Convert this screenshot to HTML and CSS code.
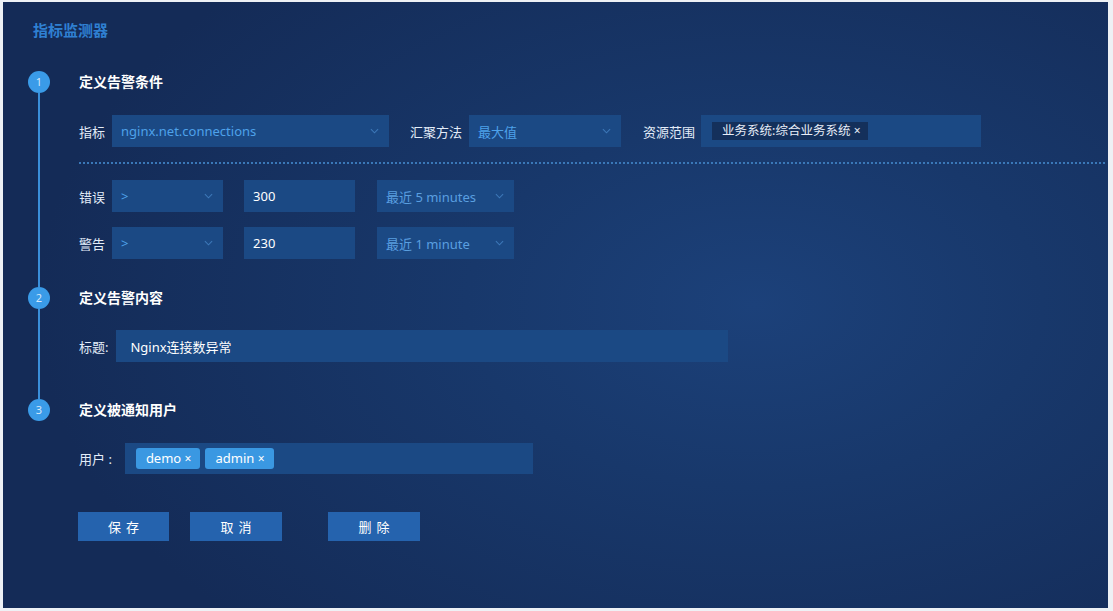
FILE: index.html
```html
<!DOCTYPE html>
<html lang="zh-CN">
<head>
<meta charset="utf-8">
<title>指标监测器</title>
<link rel="stylesheet" href="styles.css">
</head>
<body>
<div class="panel">
  <h1 class="page-title">指标监测器</h1>

  <section class="step">
    <div class="rail"><span class="dot">1</span><span class="line"></span></div>
    <div class="step-body step-body-1">
      <h2 class="step-title">定义告警条件</h2>
      <div class="row row-first">
        <span class="label">指标</span>
        <div class="field select w-metric"><span class="val">nginx.net.connections</span><svg class="chev" viewBox="0 0 10 6"><polyline points="1,1 5,5 9,1"/></svg></div>
        <span class="label label-gap">汇聚方法</span>
        <div class="field select w-agg"><span class="val">最大值</span><svg class="chev" viewBox="0 0 10 6"><polyline points="1,1 5,5 9,1"/></svg></div>
        <span class="label label-gap2">资源范围</span>
        <div class="field w-scope"><span class="scope-tag">业务系统:综合业务系统 <span class="x">×</span></span></div>
      </div>
      <div class="divider"></div>
      <div class="row row-cond">
        <span class="label">错误</span>
        <div class="field select w-op"><span class="val">&gt;</span><svg class="chev" viewBox="0 0 10 6"><polyline points="1,1 5,5 9,1"/></svg></div>
        <div class="field w-num"><span class="num">300</span></div>
        <div class="field select w-time"><span class="val val-light">最近 5 minutes</span><svg class="chev" viewBox="0 0 10 6"><polyline points="1,1 5,5 9,1"/></svg></div>
      </div>
      <div class="row row-cond2">
        <span class="label">警告</span>
        <div class="field select w-op"><span class="val">&gt;</span><svg class="chev" viewBox="0 0 10 6"><polyline points="1,1 5,5 9,1"/></svg></div>
        <div class="field w-num"><span class="num">230</span></div>
        <div class="field select w-time"><span class="val val-light">最近 1 minute</span><svg class="chev" viewBox="0 0 10 6"><polyline points="1,1 5,5 9,1"/></svg></div>
      </div>
    </div>
  </section>

  <section class="step">
    <div class="rail"><span class="dot">2</span><span class="line"></span></div>
    <div class="step-body step-body-2">
      <h2 class="step-title">定义告警内容</h2>
      <div class="row row-title">
        <span class="label label-colon">标题:</span>
        <div class="field w-titlebox"><span class="num">Nginx连接数异常</span></div>
      </div>
    </div>
  </section>

  <section class="step">
    <div class="rail"><span class="dot">3</span></div>
    <div class="step-body">
      <h2 class="step-title">定义被通知用户</h2>
      <div class="row row-users">
        <span class="label label-colon2">用户 :</span>
        <div class="field w-users">
          <span class="user-tag">demo <span class="x">×</span></span>
          <span class="user-tag">admin <span class="x">×</span></span>
        </div>
      </div>
      <div class="actions">
        <button class="btn btn-save">保存</button>
        <button class="btn btn-cancel">取消</button>
        <button class="btn btn-delete">删除</button>
      </div>
    </div>
  </section>
</div>
</body>
</html>
```
FILE: styles.css
```css
html, body {
  margin: 0;
  padding: 0;
  background: #eef1f5;
  width: 1113px;
  height: 611px;
  overflow: hidden;
}
body {
  font-family: "Noto Sans", "Noto Sans CJK SC", sans-serif;
  color: #ffffff;
}
.panel {
  box-sizing: border-box;
  margin: 2px 5px 3px 3px;
  height: 606px;
  padding: 18px 3px 0 25px;
  background-color: #142b57;
  background-image: radial-gradient(ellipse 65% 75% at 68% 50%, #1c417a 0%, #18386b 40%, #142b57 100%);
}
.page-title {
  margin: 0 0 31px 5px;
  font-size: 15px;
  line-height: 20px;
  font-weight: 700;
  color: #2f80d2;
}
.step {
  display: flex;
}
.rail {
  width: 22px;
  display: flex;
  flex-direction: column;
  align-items: center;
  margin-right: 29px;
}
.dot {
  width: 22px;
  height: 22px;
  border-radius: 50%;
  background: #3a9be8;
  color: #d5e8fb;
  font-size: 11px;
  line-height: 22px;
  text-align: center;
  flex: none;
}
.line {
  flex: 1;
  width: 2px;
  background: #3a8fda;
}
.step-body {
  flex: 1;
}
.step-body-1 { padding-bottom: 28px; }
.step-body-2 { padding-bottom: 37px; }
.step-title {
  margin: 0;
  font-size: 14px;
  line-height: 22px;
  font-weight: 700;
  color: #ffffff;
}
.row {
  display: flex;
  align-items: center;
}
.row-first { margin-top: 22px; }
.row-cond { margin-top: 16px; }
.row-cond2 { margin-top: 15px; }
.row-title { margin-top: 21px; }
.row-users { margin-top: 22px; }
.label {
  font-size: 13px;
  color: #e3ecf8;
  white-space: nowrap;
  margin-right: 7px;
}
.label-gap { margin-left: 21px; }
.label-gap2 { margin-left: 22px; margin-right: 6px; }
.label-colon { margin-right: 8px; }
.label-colon2 { margin-right: 13px; }
.field {
  box-sizing: border-box;
  height: 32px;
  background: #1b4984;
  display: flex;
  align-items: center;
  padding: 0 10px 0 9px;
  font-size: 13px;
}
.select { justify-content: space-between; }
.val { color: #4ea2ea; }
.val-light { color: #5a9fe0; }
.num { color: #ffffff; }
.chev {
  width: 9px;
  height: 6px;
  fill: none;
  stroke: #3c78b8;
  stroke-width: 1.2;
}
.w-metric { width: 277px; }
.w-agg { width: 152px; }
.w-scope { width: 280px; padding-left: 11px; }
.w-op { width: 111px; }
.w-num { width: 111px; margin-left: 21px; }
.w-time { width: 137px; margin-left: 22px; }
.w-titlebox { width: 612px; padding-left: 14px; }
.w-users { width: 408px; height: 31px; padding-left: 11px; gap: 5px; }
.scope-tag {
  background: #14305b;
  color: #e8eef8;
  font-size: 12.5px;
  line-height: 18px;
  padding: 0 7px 0 10px;
}
.x { font-size: 12px; }
.user-tag {
  background: #3a98e2;
  color: #ffffff;
  border-radius: 3px;
  font-size: 13px;
  line-height: 20px;
  padding: 0 9px 0 10px;
}
.divider {
  margin-top: 15px;
  border-top: 2px dotted #3a78b8;
}
.actions {
  display: flex;
  margin-top: 38px;
  margin-left: -1px;
}
.btn {
  height: 29px;
  border: none;
  background: #2563ae;
  color: #ffffff;
  font-family: inherit;
  font-size: 13px;
  letter-spacing: 5px;
  padding: 0 0 0 5px;
  cursor: pointer;
}
.btn-save { width: 91px; }
.btn-cancel { width: 92px; margin-left: 21px; }
.btn-delete { width: 92px; margin-left: 46px; }
```
